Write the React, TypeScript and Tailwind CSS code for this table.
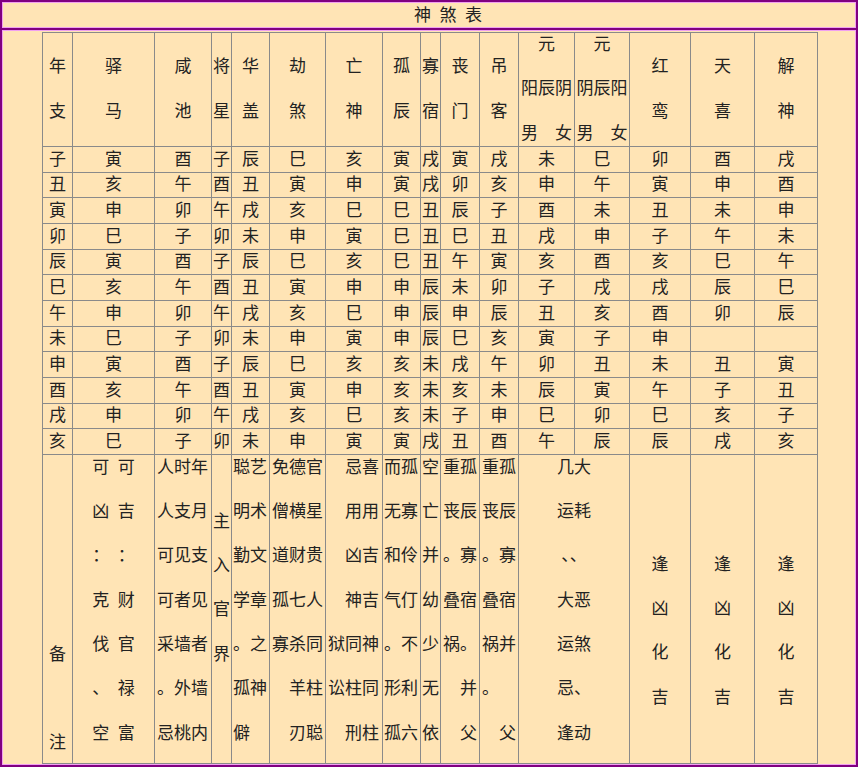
const cell = 'border-r border-b border-[#8a8a8a]';

const headers: string[][] = [
  ['年', '支'],
  ['驿', '马'],
  ['咸', '池'],
  ['将', '星'],
  ['华', '盖'],
  ['劫', '煞'],
  ['亡', '神'],
  ['孤', '辰'],
  ['寡', '宿'],
  ['丧', '门'],
  ['吊', '客'],
  ['元', '阳辰阴', '男　女'],
  ['元', '阴辰阳', '男　女'],
  ['红', '鸾'],
  ['天', '喜'],
  ['解', '神'],
];

const rows: string[] = [
  '子寅酉子辰巳亥寅戌寅戌未巳卯酉戌',
  '丑亥午酉丑寅申寅戌卯亥申午寅申酉',
  '寅申卯午戌亥巳巳丑辰子酉未丑未申',
  '卯巳子卯未申寅巳丑巳丑戌申子午未',
  '辰寅酉子辰巳亥巳丑午寅亥酉亥巳午',
  '巳亥午酉丑寅申申辰未卯子戌戌辰巳',
  '午申卯午戌亥巳申辰申辰丑亥酉卯辰',
  '未巳子卯未申寅申辰巳亥寅子申　　',
  '申寅酉子辰巳亥亥未戌午卯丑未丑寅',
  '酉亥午酉丑寅申亥未亥未辰寅午子丑',
  '戌申卯午戌亥巳亥未子申巳卯巳亥子',
  '亥巳子卯未申寅寅戌丑酉午辰辰戌亥',
];

interface Note {
  lines: string[];
  cls: string;
}

const sp = '\u2002';

const notes: Note[] = [
  { lines: ['备', '', '注'], cls: 'text-center pt-[187px]' },
  {
    lines: [`可${sp}可`, `凶${sp}吉`, `：${sp}：`, `克${sp}财`, `伐${sp}官`, `、${sp}禄`, `空${sp}富`],
    cls: 'text-center',
  },
  { lines: ['人时年', '人支月', '可见支', '可者见', '采墙者', '。外墙', '忌桃内'], cls: 'text-left pl-[2px]' },
  { lines: ['主', '入', '官', '界'], cls: 'text-center pt-[54px]' },
  { lines: ['聪艺', '明术', '勤文', '学章', '。之', '孤神', '僻'], cls: 'text-left pl-[1px]' },
  { lines: ['免德官', '僧横星', '道财贵', '孤七人', '寡杀同', '　羊柱', '　刃聪'], cls: 'text-left pl-[2px]' },
  { lines: ['　忌喜', '　用用', '　凶吉', '　神吉', '狱同神', '讼柱同', '　刑柱'], cls: 'text-left pl-[2px]' },
  { lines: ['而孤', '无寡', '和伶', '气仃', '。不', '形利', '孤六'], cls: 'text-left pl-[1px]' },
  { lines: ['空', '亡', '并', '幼', '少', '无', '依'], cls: 'text-left pl-[1px]' },
  { lines: ['重孤', '丧辰', '。寡', '叠宿', '祸。', '　并', '　父'], cls: 'text-left pl-[2px]' },
  { lines: ['重孤', '丧辰', '。寡', '叠宿', '祸并', '。', '　父'], cls: 'text-left pl-[2px]' },
  { lines: ['几大', '运耗', '、、', '大恶', '运煞', '忌、', '逢动'], cls: 'text-center col-span-2' },
  { lines: ['逢', '凶', '化', '吉'], cls: 'text-center pt-[97px]' },
  { lines: ['逢', '凶', '化', '吉'], cls: 'text-center pt-[97px]' },
  { lines: ['逢', '凶', '化', '吉'], cls: 'text-center pt-[97px]' },
];

export default function App() {
  return (
    <div className="w-[860px] h-[770px] bg-white font-['Liberation_Serif','Noto_Sans_CJK_SC',serif] text-[#222]">
      <div className="w-[858px] h-[767px] border-2 border-[#800080] bg-[#ffe4b5] flex flex-col">
        {/* Title */}
        <div className="h-[26px] border border-[#f0a0f0] flex items-center justify-center pl-[38px] text-[17px] leading-none">
          {`神${sp}煞${sp}表`}
        </div>
        <div className="h-[2px] bg-[#800080]" />

        {/* Body */}
        <div className="flex-1 border border-[#f0a0f0] pl-[39px] pt-[1px]">
          <div className="grid w-[776px] grid-cols-[30px_82px_57px_20px_38px_56px_57px_38px_20px_39px_39px_56px_55px_61px_64px_63px] border-l border-t border-[#8a8a8a] text-[17px]">
            {headers.map((h, i) => (
              <div key={`h${i}`} className={`${cell} h-[114px] flex flex-col items-center justify-center`}>
                {h.map((t, j) => (
                  <div key={j} className="leading-[44.5px] whitespace-nowrap">
                    {t}
                  </div>
                ))}
              </div>
            ))}

            {rows.map((r, i) =>
              Array.from(r).map((c, j) => (
                <div key={`r${i}-${j}`} className={`${cell} h-[25.67px] flex items-center justify-center leading-none`}>
                  {c === '　' ? '' : c}
                </div>
              ))
            )}

            {notes.map((n, i) => (
              <div key={`n${i}`} className={`${cell} h-[309px] ${n.cls}`}>
                {n.lines.map((t, j) => (
                  <div key={j} className="h-[44.3px] leading-[25px] whitespace-nowrap">
                    {t}
                  </div>
                ))}
              </div>
            ))}
          </div>
        </div>
      </div>
    </div>
  );
}
